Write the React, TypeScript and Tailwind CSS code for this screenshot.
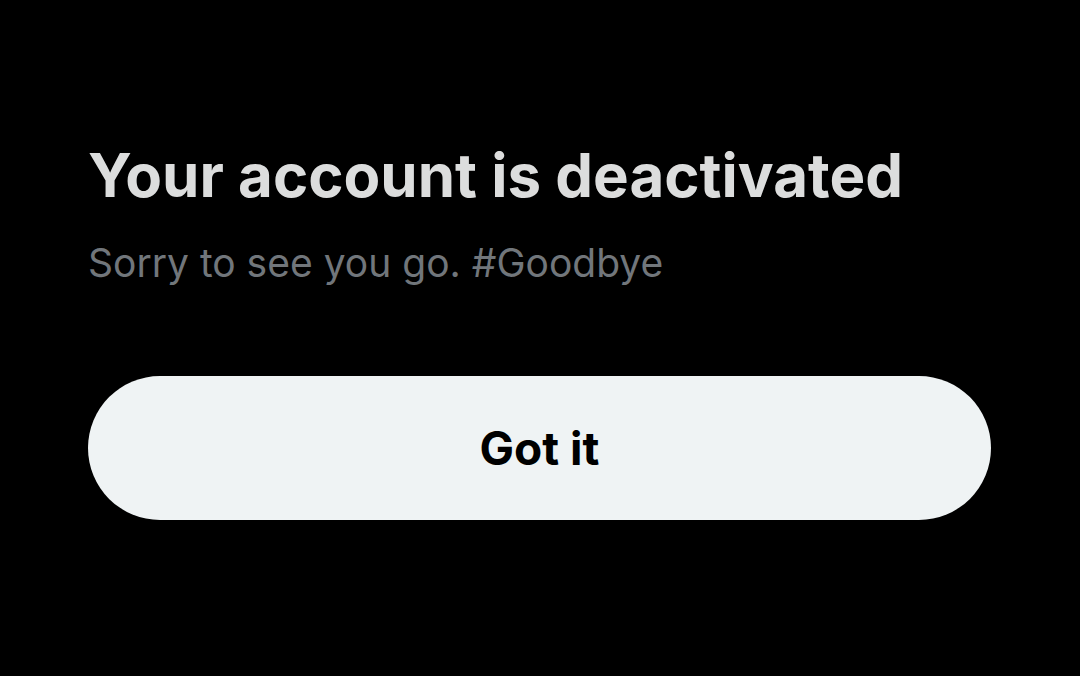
import React from "react";

export default function App() {
  return (
    <div
      className="w-[1080px] h-[676px] bg-black overflow-hidden"
      style={{ fontFamily: "Inter, 'Noto Sans', sans-serif" }}
    >
      <div className="pl-[88px] pr-[89px] pt-[140px]">
        <h1 className="text-[60px] leading-[70px] font-bold text-[#dcdddd]">
          Your account is deactivated
        </h1>
        <p className="mt-[30px] text-[39px] leading-[46px] text-[#71767b]">
          Sorry to see you go. #Goodbye
        </p>
        <button className="mt-[90px] w-full h-[144px] rounded-full bg-[#eff3f4] text-black text-[46px] font-bold">
          Got it
        </button>
      </div>
    </div>
  );
}
